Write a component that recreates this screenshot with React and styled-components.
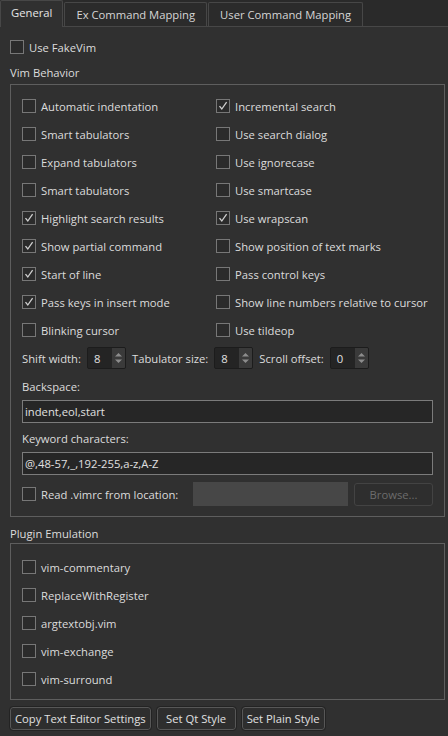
import React from 'react';
import styled, { createGlobalStyle } from 'styled-components';

const GlobalStyle = createGlobalStyle`
  html, body { margin: 0; padding: 0; background: #303030; }
  body {
    font-family: "Open Sans", "Noto Sans", "DejaVu Sans", sans-serif;
    font-size: 11.25px;
    color: #dcdcdc;
  }
  * { box-sizing: border-box; }
`;

const Window = styled.div`
  width: 448px;
  height: 736px;
  display: flex;
  flex-direction: column;
  background: #303030;
  overflow: hidden;
`;

const TabBar = styled.div`
  height: 27px;
  flex: none;
  display: flex;
  align-items: flex-end;
  gap: 1px;
  background: #2a2a2a;
  border-bottom: 1px solid #474747;
`;

const Tab = styled.div`
  height: ${p => (p.$active ? 27 : 24)}px;
  margin-bottom: ${p => (p.$active ? -1 : 0)}px;
  padding: 0 ${p => (p.$active ? 10 : 11)}px ${p => (p.$active ? 3 : 0)}px;
  display: flex;
  align-items: center;
  background: ${p => (p.$active ? '#303030' : '#2b2b2b')};
  border: 1px solid #474747;
  border-bottom: none;
  border-radius: 2px 2px 0 0;
  color: ${p => (p.$active ? '#e6e6e6' : '#d6d6d6')};
  white-space: nowrap;
`;

const Pane = styled.div`
  flex: 1;
  display: flex;
  flex-direction: column;
  padding: 10px 3px 0 10px;
`;

const CheckRow = styled.label`
  display: flex;
  align-items: center;
  gap: 5px;
  height: ${p => p.$h || 28}px;
  white-space: nowrap;
`;

const Box = styled.span`
  width: 14px;
  height: 14px;
  flex: none;
  border: 1px solid #777777;
  background: #2b2b2b;
  display: inline-flex;
  align-items: center;
  justify-content: center;
`;

const GroupTitle = styled.div`
  height: 16px;
  line-height: 16px;
  margin-top: ${p => p.$mt}px;
  margin-bottom: ${p => p.$mb}px;
`;

const GroupBox = styled.div`
  border: 1px solid #5e5e5e;
  padding: ${p => p.$pad};
  display: flex;
  flex-direction: column;
`;

const TwoCols = styled.div`
  display: grid;
  grid-template-columns: 194px 1fr;
  grid-auto-rows: 28px;
`;

const SpinRow = styled.div`
  display: flex;
  align-items: center;
  gap: 6px;
  height: 28px;
  white-space: nowrap;
`;

const Spin = styled.div`
  width: 39px;
  height: 22px;
  display: flex;
  border: 1px solid #1c1c1c;
  border-radius: 2px;
  background: #242424;
  overflow: hidden;
`;

const SpinValue = styled.span`
  flex: 1;
  padding-left: 6px;
  display: flex;
  align-items: center;
  color: #e0e0e0;
`;

const SpinArrows = styled.span`
  width: 13px;
  background: #3a3a3a;
  display: flex;
  align-items: center;
  justify-content: center;
`;

const FieldLabel = styled.div`
  height: 16px;
  line-height: 16px;
  margin-top: ${p => p.$mt}px;
`;

const LineEdit = styled.div`
  height: 23px;
  margin-top: ${p => p.$mt}px;
  border: 1px solid #7b7b7b;
  background: #262626;
  padding-left: 2px;
  display: flex;
  align-items: center;
  color: #e0e0e0;
  white-space: nowrap;
`;

const VimrcRow = styled.div`
  display: flex;
  align-items: center;
  height: 24px;
  margin-top: 7px;
`;

const VimrcLabel = styled(CheckRow)`
  width: 171px;
  flex: none;
`;

const DisabledField = styled.div`
  width: 155px;
  height: 24px;
  background: #474747;
`;

const BrowseButton = styled.div`
  width: 79px;
  height: 23px;
  margin-left: 6px;
  border: 1px solid #434343;
  border-radius: 3px;
  background: #2e2e2e;
  color: #6c6c6c;
  display: flex;
  align-items: center;
  justify-content: center;
`;

const ButtonRow = styled.div`
  display: flex;
  gap: 6px;
  margin-top: 7px;
`;

const Button = styled.div`
  height: 23px;
  min-width: 79px;
  padding: 0 4px;
  border: 1px solid #575757;
  outline: 1px solid #232323;
  border-radius: 3px;
  background: #2e2e2e;
  display: flex;
  align-items: center;
  justify-content: center;
  white-space: nowrap;
  color: #e0e0e0;
`;

const Check = ({ checked }) => (
  <Box>
    {checked && (
      <svg width="12" height="12" viewBox="0 0 12 12">
        <path d="M2.5 6.2 L4.8 9 L9.6 2.2" fill="none" stroke="#cfcfcf" strokeWidth="1.3" />
      </svg>
    )}
  </Box>
);

const Option = ({ label, checked, h }) => (
  <CheckRow $h={h}>
    <Check checked={checked} />
    <span>{label}</span>
  </CheckRow>
);

const SpinBox = ({ value }) => (
  <Spin>
    <SpinValue>{value}</SpinValue>
    <SpinArrows>
      <svg width="9" height="14" viewBox="0 0 9 14">
        <path d="M1 5.5 L4.5 2 L8 5.5 Z" fill="#8c8c8c" />
        <path d="M1 8.5 L4.5 12 L8 8.5 Z" fill="#8c8c8c" />
      </svg>
    </SpinArrows>
  </Spin>
);

const behavior = [
  ['Automatic indentation', false, 'Incremental search', true],
  ['Smart tabulators', false, 'Use search dialog', false],
  ['Expand tabulators', false, 'Use ignorecase', false],
  ['Smart tabulators', false, 'Use smartcase', false],
  ['Highlight search results', true, 'Use wrapscan', true],
  ['Show partial command', true, 'Show position of text marks', false],
  ['Start of line', true, 'Pass control keys', false],
  ['Pass keys in insert mode', true, 'Show line numbers relative to cursor', false],
  ['Blinking cursor', false, 'Use tildeop', false],
];

const plugins = ['vim-commentary', 'ReplaceWithRegister', 'argtextobj.vim', 'vim-exchange', 'vim-surround'];

export default function App() {
  return (
    <Window>
      <GlobalStyle />
      <TabBar>
        <Tab $active>General</Tab>
        <Tab>Ex Command Mapping</Tab>
        <Tab>User Command Mapping</Tab>
      </TabBar>
      <Pane>
        <Option label="Use FakeVim" h={20} />
        <GroupTitle $mt={8} $mb={3}>Vim Behavior</GroupTitle>
        <GroupBox $pad="7px 11px 10px 11px">
          <TwoCols>
            {behavior.map(([l, lc, r, rc], i) => (
              <React.Fragment key={i}>
                <Option label={l} checked={lc} />
                <Option label={r} checked={rc} />
              </React.Fragment>
            ))}
          </TwoCols>
          <SpinRow>
            <span>Shift width:</span>
            <SpinBox value="8" />
            <span>Tabulator size:</span>
            <SpinBox value="8" />
            <span>Scroll offset:</span>
            <SpinBox value="0" />
          </SpinRow>
          <FieldLabel $mt={7}>Backspace:</FieldLabel>
          <LineEdit $mt={5}>indent,eol,start</LineEdit>
          <FieldLabel $mt={8}>Keyword characters:</FieldLabel>
          <LineEdit $mt={5}>@,48-57,_,192-255,a-z,A-Z</LineEdit>
          <VimrcRow>
            <VimrcLabel $h={24}>
              <Check />
              <span>Read .vimrc from location:</span>
            </VimrcLabel>
            <DisabledField />
            <BrowseButton>Browse...</BrowseButton>
          </VimrcRow>
        </GroupBox>
        <GroupTitle $mt={9} $mb={1}>Plugin Emulation</GroupTitle>
        <GroupBox $pad="9px 11px 6px 11px">
          {plugins.map(p => (
            <Option key={p} label={p} />
          ))}
        </GroupBox>
        <ButtonRow>
          <Button>Copy Text Editor Settings</Button>
          <Button>Set Qt Style</Button>
          <Button>Set Plain Style</Button>
        </ButtonRow>
      </Pane>
    </Window>
  );
}
